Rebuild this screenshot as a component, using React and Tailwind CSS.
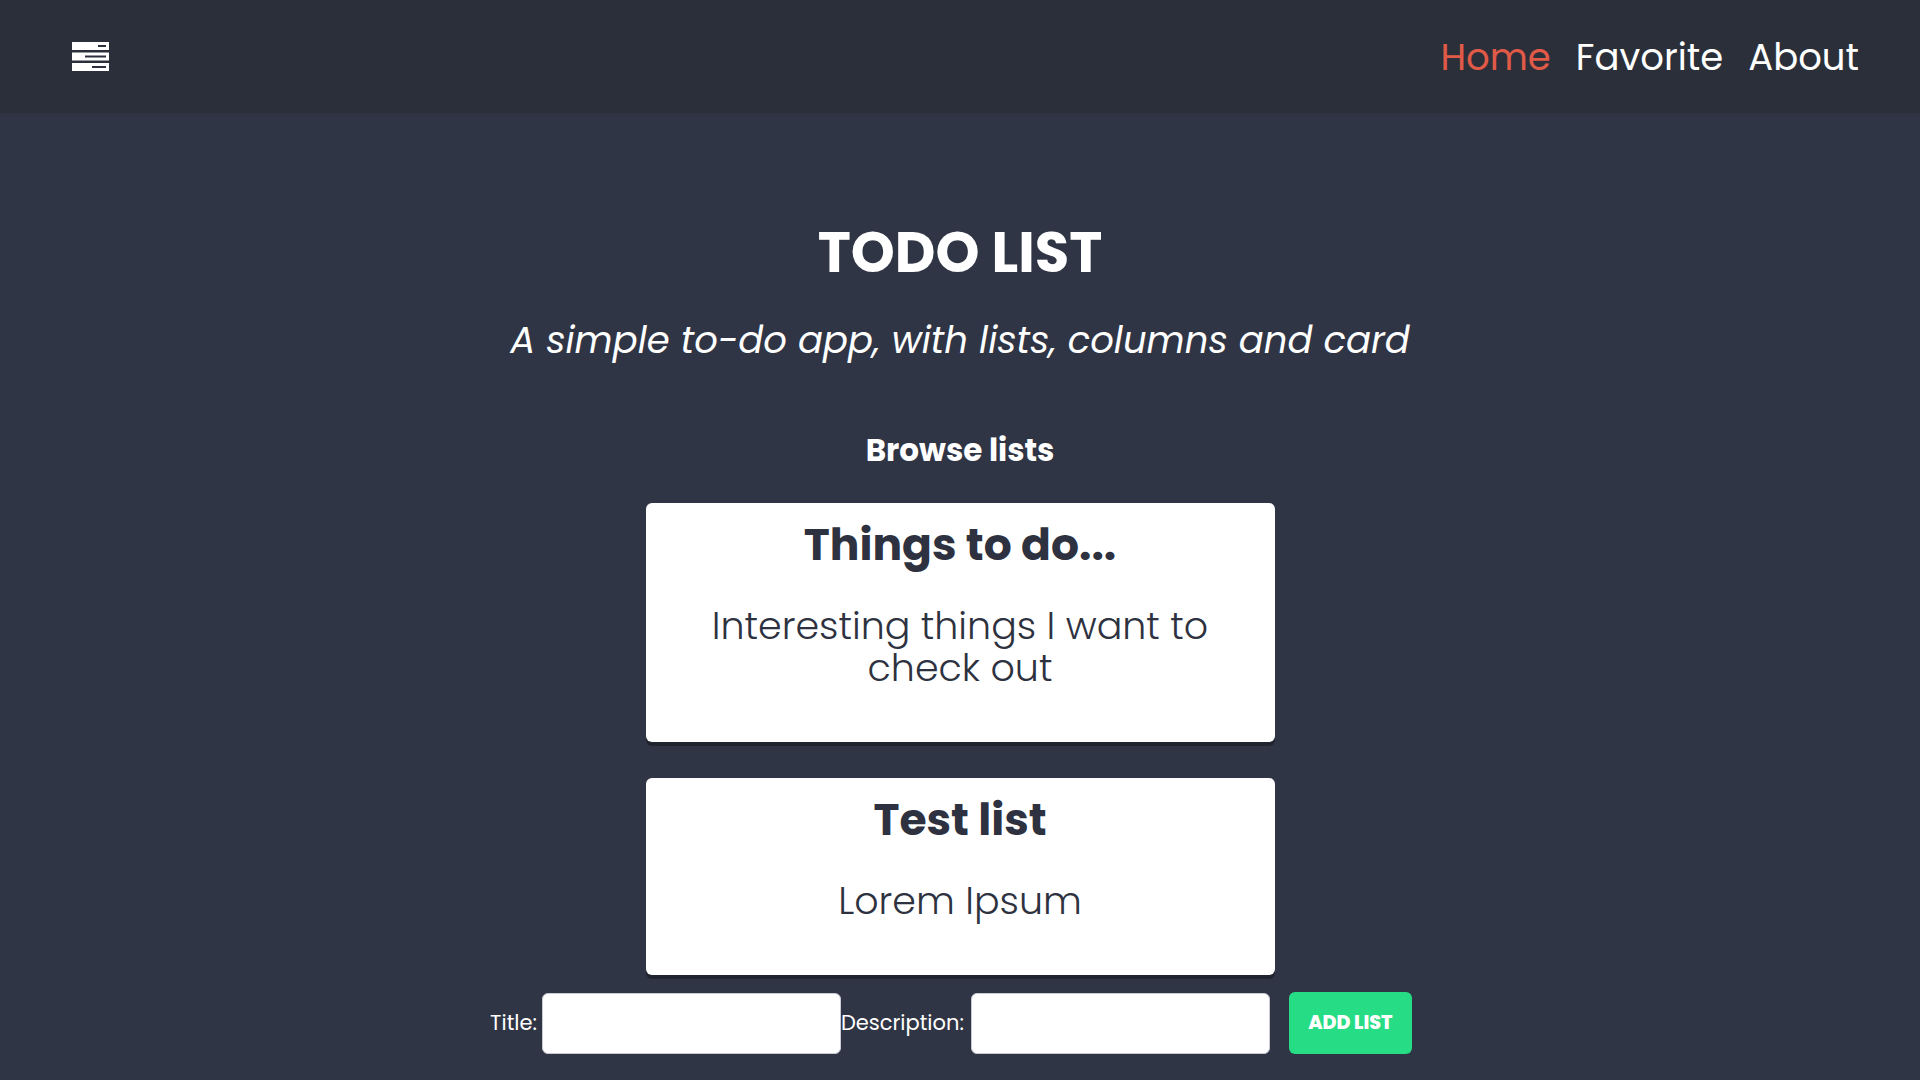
import React from "react";

function MenuIcon() {
  return (
    <svg width="37" height="29" viewBox="0 0 37 29" className="block">
      <rect x="0" y="0" width="37" height="8" fill="#ffffff" />
      <rect x="26" y="3" width="8" height="2" fill="#2c303b" />
      <rect x="0" y="10.5" width="37" height="8" fill="#ffffff" />
      <rect x="13" y="13.5" width="21" height="2" fill="#2c303b" />
      <rect x="0" y="21" width="37" height="8" fill="#ffffff" />
      <rect x="20" y="24" width="14" height="2" fill="#2c303b" />
    </svg>
  );
}

function Card({ title, children }) {
  return (
    <div className="w-[629px] bg-white rounded-[6px] shadow-[0_4px_0_rgba(20,22,30,0.55)] flex flex-col items-center text-center text-[#2e3240] pt-[16px] pb-[53px] px-6">
      <h2 className="text-[44px] leading-[52px] font-bold">{title}</h2>
      <p className="mt-[34px] text-[38px] leading-[42px] font-light">{children}</p>
    </div>
  );
}

export default function App() {
  return (
    <div
      className="min-h-screen bg-[#303545] text-white"
      style={{ fontFamily: '"Poppins", "Open Sans", "Noto Sans", sans-serif' }}
    >
      <header className="h-[113px] bg-[#2b2f3a] flex items-center justify-between pl-[72px] pr-[61px]">
        <MenuIcon />
        <nav className="flex items-center gap-[25px] text-[37px] leading-none pt-[1px]">
          <a className="text-[#e05a47]">Home</a>
          <a className="text-white">Favorite</a>
          <a className="text-white">About</a>
        </nav>
      </header>
      <main className="flex flex-col items-center pt-[108px] pb-10">
        <h1 className="text-[56px] leading-[64px] font-bold">TODO LIST</h1>
        <p className="mt-[33px] text-[37px] leading-[44px] italic font-normal">
          A simple to-do app, with lists, columns and card
        </p>
        <h3 className="mt-[69px] text-[31px] leading-[38px] font-bold">Browse lists</h3>
        <div className="mt-[34px] flex flex-col items-center gap-[36px]">
          <Card title="Things to do...">
            Interesting things I want to
            <br />
            check out
          </Card>
          <Card title="Test list">Lorem Ipsum</Card>
        </div>
        <form className="mt-[17px] flex items-center pr-[18px]">
          <label className="text-[21px] mr-[5px]">Title:</label>
          <input className="w-[299px] h-[61px] bg-white rounded-[6px] border border-[#c9cad3] outline-none" />
          <label className="text-[21px] mr-[7px]">Description:</label>
          <input className="w-[299px] h-[61px] bg-white rounded-[6px] border border-[#c9cad3] outline-none" />
          <button
            type="button"
            className="ml-[19px] w-[123px] h-[62px] rounded-[6px] bg-[#26dc84] text-white text-[19px] font-extrabold"
          >
            ADD LIST
          </button>
        </form>
      </main>
    </div>
  );
}
